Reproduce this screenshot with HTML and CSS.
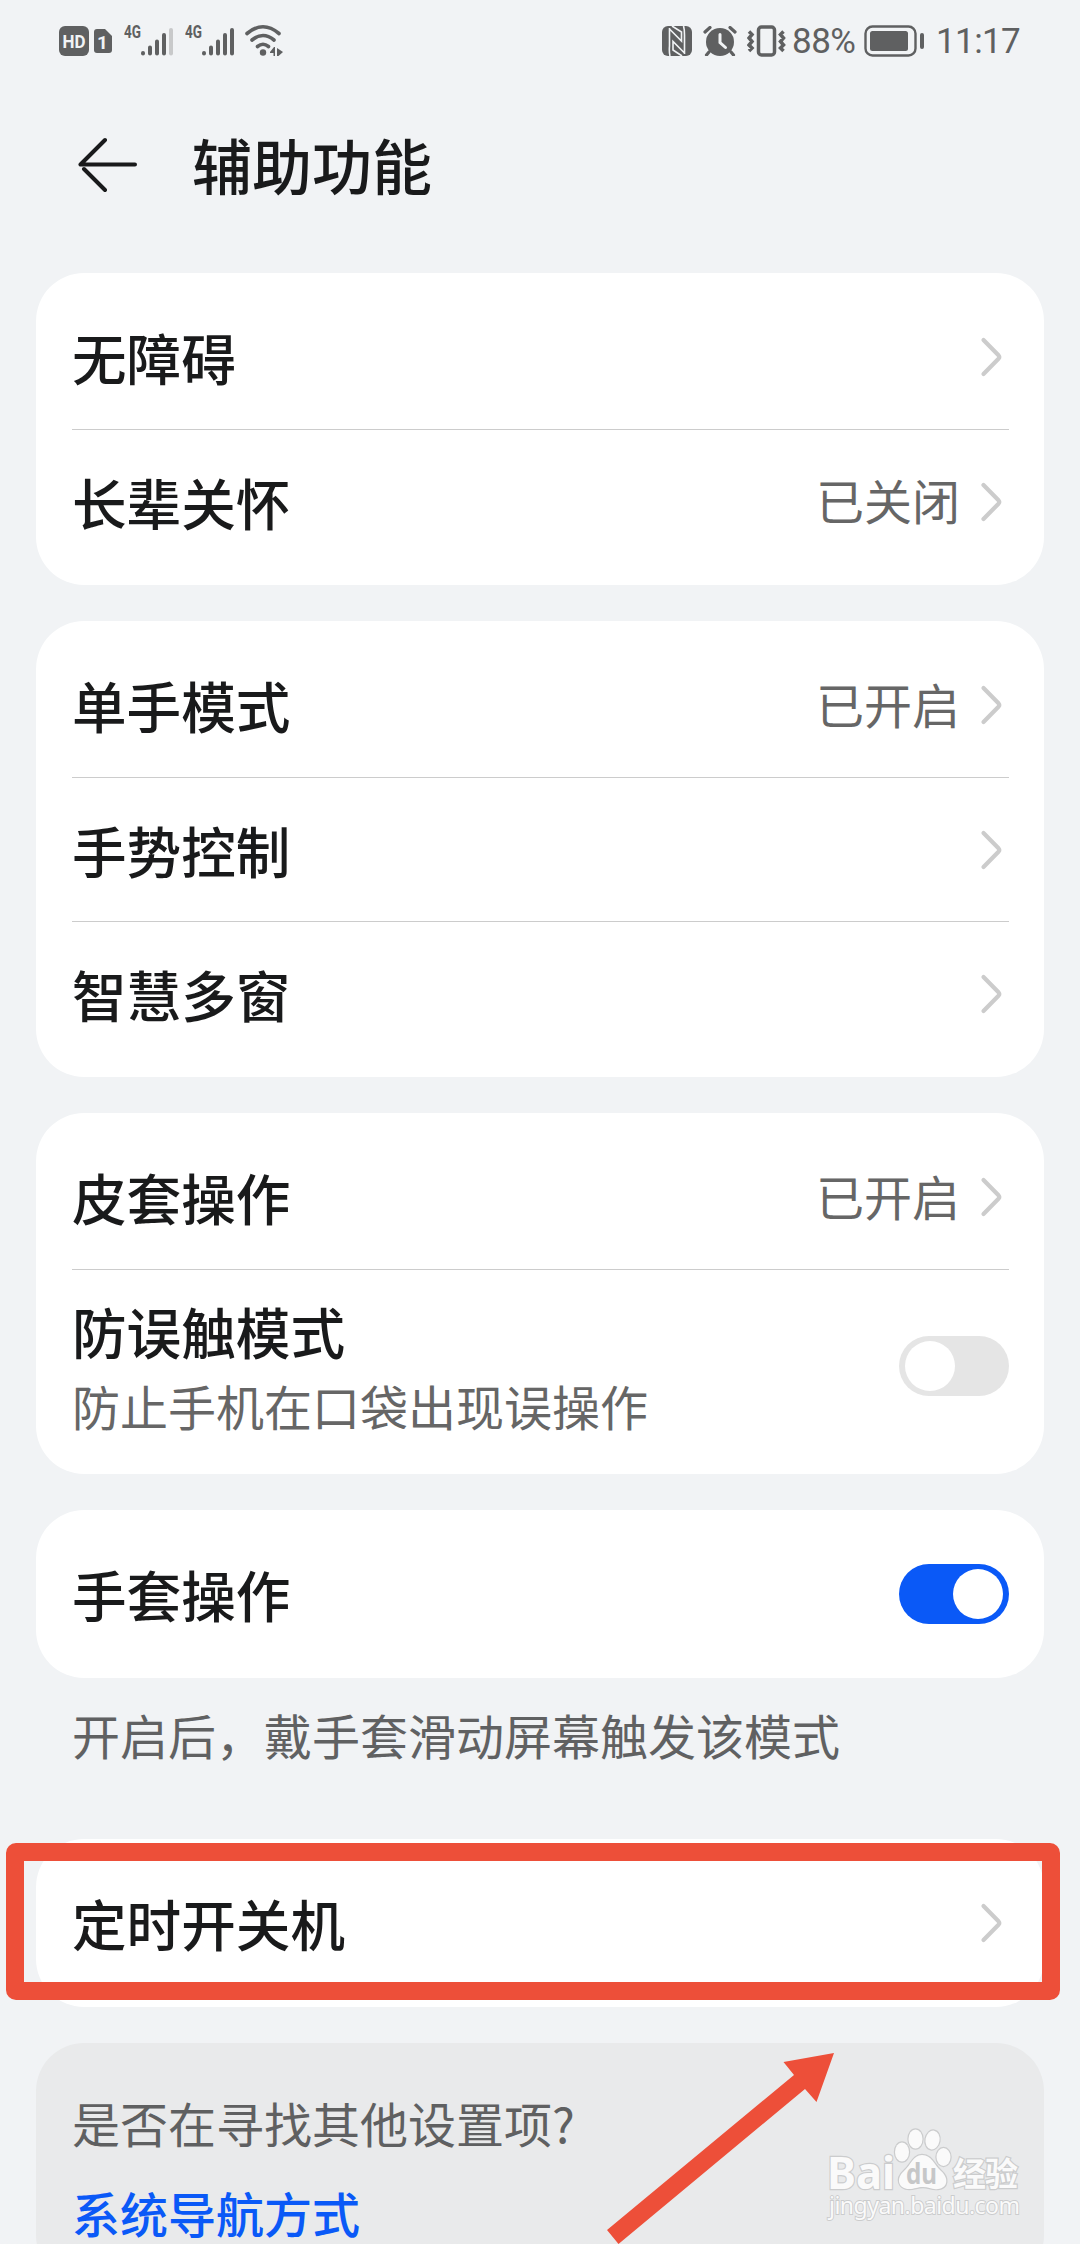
FILE: index.html
```html
<!DOCTYPE html>
<html lang="zh-CN">
<head>
    <meta charset="UTF-8">
    <meta name="viewport" content="width=device-width, initial-scale=1.0">
    <title>辅助功能</title>
    <link rel="stylesheet" href="styles.css">
</head>
<body>
    <svg class="defs">
        <symbol id="chevron" viewBox="0 0 36 48">
            <path d="M11.5 7L26.5 22.3Q28 24 26.5 25.7L11.5 41" fill="none" stroke="#ccc" stroke-width="4.2" stroke-linecap="round" stroke-linejoin="round"/>
        </symbol>
    </svg>

    <div class="status-bar">
        <div class="status-left">
            <svg class="hd" width="30" height="30" viewBox="0 0 30 30">
                <rect width="30" height="30" rx="6"/>
                <text x="15" y="22" text-anchor="middle" textLength="23" lengthAdjust="spacingAndGlyphs">HD</text>
            </svg>
            <svg class="sim" width="18" height="24" viewBox="0 0 18 24">
                <path d="M3 0H11L18 7V21Q18 24 15 24H3Q0 24 0 21V3Q0 0 3 0Z"/>
                <text x="8.5" y="19.5" text-anchor="middle">1</text>
            </svg>
            <svg class="signal first" width="50" height="40" viewBox="0 -3 50 40">
                <text x="0" y="14" textLength="17" lengthAdjust="spacingAndGlyphs">4G</text>
                <path d="M19 29V29.5M26 23.5V29.5M33 17.5V29.5M40 11V29.5"/>
                <path class="off" d="M47 6V29.5"/>
            </svg>
            <svg class="signal" width="50" height="40" viewBox="0 -3 50 40">
                <text x="0" y="14" textLength="17" lengthAdjust="spacingAndGlyphs">4G</text>
                <path d="M19 29V29.5M26 23.5V29.5M33 17.5V29.5M40 11V29.5M47 6V29.5"/>
            </svg>
            <svg class="wifi" width="38" height="34" viewBox="0 0 38 34">
                <path d="M2 9.5Q18 -4 34 9.5M7 16Q18 7 29 16M12.5 22.5Q18 18 23.5 22.5" fill="none" stroke="#5f6061" stroke-width="3.6" stroke-linecap="round"/>
                <circle cx="18" cy="28.5" r="3.2"/>
                <path d="M25 28L29 23H30V32H28.5V29H25ZM32 24L38 28L33.5 32H32Z"/>
            </svg>
        </div>
        <div class="status-right">
            <svg width="30" height="30" viewBox="0 0 30 30">
                <rect width="30" height="30" rx="6"/>
                <path d="M8 30Q7 26 7.500 20V2M22.500 28V9Q22.500 3 21.500 0M7.500 3L19.500 15V6L10 0M22.500 27L11 15.500V24L20 30" fill="none" stroke="#f1f3f5" stroke-width="1.600"/>
            </svg>
            <svg class="alarm" width="34" height="30" viewBox="0 0 34 30">
                <circle cx="17" cy="16" r="14"/>
                <path d="M2 6L7 1.5M32 6L27 1.5M6 26L3.5 29M28 26L30.5 29" fill="none" stroke="#5f6061" stroke-width="3.2" stroke-linecap="round"/>
                <path d="M17 8.5V16.5L22.5 21.5" fill="none" stroke="#f1f3f5" stroke-width="3" stroke-linecap="round"/>
            </svg>
            <svg class="vibrate" width="39" height="32" viewBox="0 0 39 32">
                <rect x="11.5" y="2" width="16" height="28" rx="3"/>
                <path d="M2 6.5L5 9.5L2 13L5 16.5L2 20L5 23L2 26M36.5 6.5L33.5 9.5L36.5 13L33.5 16.5L36.5 20L33.5 23L36.5 26"/>
            </svg>
            <span class="percent">88%</span>
            <svg class="battery" width="61" height="32" viewBox="0 0 61 32">
                <rect x="1.5" y="1.5" width="50" height="29" rx="7" fill="none" stroke="#5f6061" stroke-width="2.4"/>
                <rect x="6" y="6" width="38" height="20" rx="2.5"/>
                <rect x="56" y="8" width="4" height="16" rx="2"/>
            </svg>
            <span class="time">11:17</span>
        </div>
    </div>

    <header>
        <svg width="60" height="56" viewBox="0 0 60 56">
            <path d="M27 3L2.500 27.500H57M6 32L27 53" fill="none" stroke="#191a1b" stroke-width="4" stroke-linecap="round" stroke-linejoin="round"/>
        </svg>
        <h1>辅助功能</h1>
    </header>

    <main>
        <section class="card">
            <div class="row">
                <span class="label">无障碍</span>
                <svg class="chevron"><use href="#chevron"/></svg>
            </div>
            <div class="row">
                <span class="label">长辈关怀</span>
                <span class="value">已关闭</span>
                <svg class="chevron"><use href="#chevron"/></svg>
            </div>
        </section>

        <section class="card">
            <div class="row">
                <span class="label">单手模式</span>
                <span class="value">已开启</span>
                <svg class="chevron"><use href="#chevron"/></svg>
            </div>
            <div class="row">
                <span class="label">手势控制</span>
                <svg class="chevron"><use href="#chevron"/></svg>
            </div>
            <div class="row">
                <span class="label">智慧多窗</span>
                <svg class="chevron"><use href="#chevron"/></svg>
            </div>
        </section>

        <section class="card">
            <div class="row">
                <span class="label">皮套操作</span>
                <span class="value">已开启</span>
                <svg class="chevron"><use href="#chevron"/></svg>
            </div>
            <div class="row tall">
                <div class="label">
                    <div class="name">防误触模式</div>
                    <div class="desc">防止手机在口袋出现误操作</div>
                </div>
                <span class="toggle"></span>
            </div>
        </section>

        <section class="card">
            <div class="row">
                <span class="label">手套操作</span>
                <span class="toggle on"></span>
            </div>
        </section>
        <p class="hint">开启后，戴手套滑动屏幕触发该模式</p>

        <section class="card">
            <div class="row">
                <span class="label">定时开关机</span>
                <svg class="chevron"><use href="#chevron"/></svg>
            </div>
        </section>

        <section class="card more">
            <p>是否在寻找其他设置项?</p>
            <a href="#">系统导航方式</a>
        </section>
    </main>

    <!-- annotations -->
    <div class="highlight"></div>
    <svg class="arrow" width="230" height="194" viewBox="0 0 230 194">
        <path d="M229 3L178.5 12L189 25L2 180L13.5 194L200 39L211.5 52Z" fill="#ed4f39"/>
    </svg>
    <svg class="watermark" width="210" height="110" viewBox="0 0 210 110">
        <g class="mark">
            <text class="bai" x="7" y="69" textLength="68" lengthAdjust="spacingAndGlyphs">Bai</text>
            <ellipse cx="82" cy="32" rx="7" ry="9.5"/>
            <ellipse cx="95.5" cy="19" rx="7" ry="9.5"/>
            <ellipse cx="112.5" cy="20" rx="7" ry="9.5" transform="rotate(10 112.5 20)"/>
            <ellipse cx="123.5" cy="37" rx="7" ry="9"/>
            <path d="M102 35C93 35 91 45 84 51C75 59 79 69 89 69C95 69 97 67 103 67C109 67 112 70 118 69C128 68 129 58 121 51C114 45 112 35 102 35Z"/>
            <text class="du" x="86" y="64" textLength="31" lengthAdjust="spacingAndGlyphs">du</text>
            <text class="jingyan" x="133" y="66" textLength="65">经验</text>
            <text class="url" x="9" y="94" textLength="191">jingyan.baidu.com</text>
        </g>
    </svg>
</body>
</html>
```
FILE: styles.css
```css
* {
    box-sizing: border-box;
}
body {
    font-family: "Noto Sans CJK SC", sans-serif;
    margin: 0;
    height: 2244px;
    position: relative;
    overflow: hidden;
    background-color: #f1f3f5;
    color: #191a1b;
}
.defs {
    display: none;
}
svg {
    display: block;
    flex: none;
}

/* status bar */
.status-bar {
    display: flex;
    justify-content: space-between;
    height: 81px;
    padding: 0 58px 0 59px;
    font-family: Roboto, sans-serif;
    font-size: 35px;
    color: #5f6061;
    fill: #5f6061;
}
.status-left,
.status-right {
    display: flex;
    align-items: center;
}
.status-bar text {
    font-weight: 700;
}
.hd text,
.sim text {
    fill: #f1f3f5;
    font-size: 19px;
}
.sim {
    margin-left: 5px;
}
.signal {
    margin-left: 11px;
}
.signal text {
    font-size: 18px;
}
.signal path {
    stroke: #5f6061;
    stroke-width: 4;
    stroke-linecap: round;
}
.signal .off {
    stroke: #c8c9ca;
}
.signal.first {
    margin-left: 12px;
}
.wifi {
    margin-left: 10px;
}
.alarm {
    margin-left: 11px;
}
.vibrate {
    margin-left: 10px;
    fill: none;
    stroke: #5f6061;
    stroke-width: 3.5;
}
.percent {
    width: 66px;
    margin: 2px 0 0 6px;
    letter-spacing: -0.5px;
}
.battery {
    margin-left: 6px;
}
.time {
    width: 86px;
    margin: 2px 0 0 11px;
    letter-spacing: -0.6px;
    white-space: nowrap;
}

header {
    display: flex;
    align-items: center;
    gap: 54px;
    height: 168px;
    padding-left: 78px;
}
h1 {
    margin: 0 0 3px;
    font-size: 60px;
    font-weight: 500;
    line-height: 80px;
}

/* settings list */
main {
    display: flex;
    flex-direction: column;
    gap: 36px;
    padding: 24px 36px 0;
}
.card {
    background-color: white;
    border-radius: 48px;
    padding: 12px 35px 12px 36px;
}
.row {
    display: flex;
    align-items: center;
    height: 144px;
}
.row + .row {
    border-top: 1px solid #ccc;
}
.row.tall {
    height: 193px;
}
.label {
    flex: 1;
    font-size: 54.6px;
    font-weight: 500;
    line-height: 72px;
}
.value {
    margin: 0 12px 5px 0;
    font-size: 48px;
    line-height: 70px;
    color: #666;
}
.desc {
    margin-top: 5px;
    font-size: 48px;
    font-weight: 400;
    line-height: 66px;
    color: #666;
}
.chevron {
    width: 36px;
    height: 48px;
    margin-right: 1px;
}
.toggle {
    display: flex;
    width: 110px;
    height: 60px;
    padding: 5px 6px;
    border-radius: 30px;
    background-color: #e5e5e5;
}
.toggle::after {
    content: "";
    width: 50px;
    height: 50px;
    border-radius: 50%;
    background-color: white;
}
.toggle.on {
    justify-content: flex-end;
    background-color: #0a59f7;
}
.hint {
    height: 89px;
    margin: 0;
    padding: 0 36px;
    font-size: 48px;
    line-height: 40px;
    color: #606162;
}
.card.more {
    height: 240px;
    padding: 43px 36px 0;
    background-color: #e9eaeb;
    font-size: 48px;
    line-height: 72px;
}
.more p {
    margin: 0 0 18px;
    color: #5f6061;
}
.more a {
    color: #0a59f7;
    font-weight: 500;
    text-decoration: none;
}

.highlight {
    position: absolute;
    left: 6px;
    top: 1843px;
    width: 1054px;
    height: 157px;
    border: 18px solid #ed4f39;
    border-radius: 10px;
}
.arrow {
    position: absolute;
    left: 605px;
    top: 2050px;
}
.watermark {
    position: absolute;
    left: 820px;
    top: 2120px;
}
.mark {
    fill: #fafafa;
    stroke: #cbcccd;
    stroke-width: 2.4;
    paint-order: stroke;
    font-family: "Noto Sans", "Noto Sans CJK SC", sans-serif;
}
.bai {
    font-size: 45px;
    font-weight: 700;
}
.du {
    font-size: 28px;
    fill: #c6c7c8;
    stroke: none;
    font-weight: 700;
}
.jingyan {
    font-size: 33px;
    font-weight: 700;
}
.url {
    font-size: 23px;
    stroke-width: 1.8;
}
```
